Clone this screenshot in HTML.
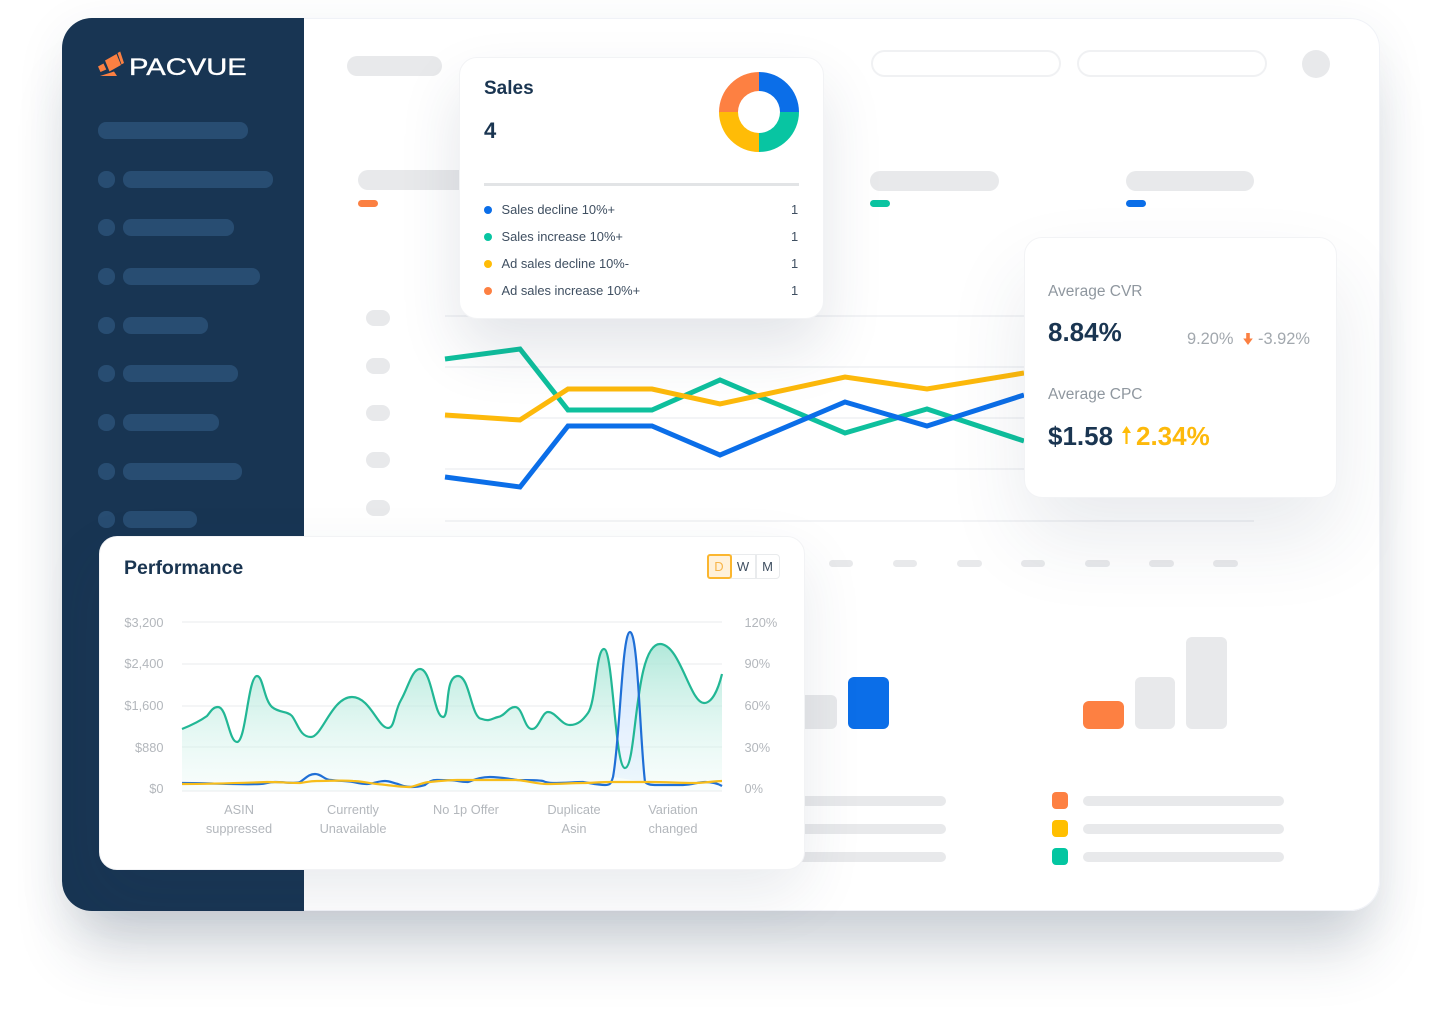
<!DOCTYPE html>
<html lang="en">
<head>
<meta charset="utf-8">
<title>Pacvue Dashboard</title>
<style>
html,body{margin:0;padding:0;background:#fff;}
body{width:1440px;height:1031px;position:relative;overflow:hidden;font-family:"Liberation Sans",Arial,sans-serif;color:#1a3551;}
.a{position:absolute;}
.win{left:62px;top:18px;width:1318px;height:893px;border-radius:30px;background:#fff;box-shadow:0 52px 60px -14px rgba(40,60,85,.2),0 12px 50px rgba(40,60,85,.08);}
.winclip{left:62px;top:18px;width:1318px;height:893px;border-radius:30px;overflow:hidden;background:#fff;box-shadow:inset 0 0 0 1px #f0f2f7;}
.side{left:0;top:0;width:242px;height:893px;background:#183553;}
.sb{background:#284d72;border-radius:8px;height:17px;}
.g{background:#e8e9eb;border-radius:10px;}
.card{background:#fff;border:1.5px solid #f2f3f5;box-sizing:border-box;}
.t{position:absolute;white-space:nowrap;line-height:1;}
.row{font-size:12.9px;color:#3f4f61;}
.ax{font-size:12.8px;color:#b3b7bc;}
.c{text-align:center;width:100px;}
</style>
</head>
<body>
<div class="a win"></div>
<div class="a winclip">
  <div class="a side"></div>
</div>

<!-- sidebar bars -->
<div class="a sb" style="left:98px;top:122px;width:150px;"></div>
<div class="a sb" style="left:98px;top:171px;width:17px;"></div><div class="a sb" style="left:123px;top:171px;width:150px;"></div>
<div class="a sb" style="left:98px;top:219px;width:17px;"></div><div class="a sb" style="left:123px;top:219px;width:111px;"></div>
<div class="a sb" style="left:98px;top:268px;width:17px;"></div><div class="a sb" style="left:123px;top:268px;width:137px;"></div>
<div class="a sb" style="left:98px;top:317px;width:17px;"></div><div class="a sb" style="left:123px;top:317px;width:85px;"></div>
<div class="a sb" style="left:98px;top:365px;width:17px;"></div><div class="a sb" style="left:123px;top:365px;width:115px;"></div>
<div class="a sb" style="left:98px;top:414px;width:17px;"></div><div class="a sb" style="left:123px;top:414px;width:96px;"></div>
<div class="a sb" style="left:98px;top:463px;width:17px;"></div><div class="a sb" style="left:123px;top:463px;width:119px;"></div>
<div class="a sb" style="left:98px;top:511px;width:17px;"></div><div class="a sb" style="left:123px;top:511px;width:74px;"></div>

<!-- logo -->
<svg class="a" style="left:90px;top:44px;" width="40" height="36" viewBox="90 44 40 36">
  <g fill="#fb8042">
    <polygon points="105,60.5 116.5,54 121,65 109.5,71.5"/>
    <polygon points="117.5,53 120.2,51.5 124,63 121.5,64.5"/>
    <polygon points="98,66.5 103.5,63.5 106.3,69.5 100.5,72"/>
    <polygon points="100,76 114,71.5 117,76"/>
  </g>
</svg>
<div class="t" style="left:129px;top:56px;font-size:24px;color:#fff;transform:scaleX(1.215);transform-origin:0 0;-webkit-text-stroke:.35px #fff;">PACVUE</div>

<!-- top placeholders -->
<div class="a g" style="left:347px;top:56px;width:95px;height:20px;"></div>
<div class="a" style="left:871px;top:50px;width:190px;height:27px;border:2px solid #f0f1f3;border-radius:14px;box-sizing:border-box;"></div>
<div class="a" style="left:1077px;top:50px;width:190px;height:27px;border:2px solid #f0f1f3;border-radius:14px;box-sizing:border-box;"></div>
<div class="a g" style="left:1302px;top:50px;width:28px;height:28px;border-radius:50%;"></div>

<div class="a g" style="left:358px;top:170px;width:128px;height:20px;"></div>
<div class="a" style="left:358px;top:200px;width:20px;height:7px;border-radius:4px;background:#fb8042;"></div>
<div class="a g" style="left:870px;top:171px;width:129px;height:20px;"></div>
<div class="a" style="left:870px;top:200px;width:20px;height:7px;border-radius:4px;background:#0ac4a1;"></div>
<div class="a g" style="left:1126px;top:171px;width:128px;height:20px;"></div>
<div class="a" style="left:1126px;top:200px;width:20px;height:7px;border-radius:4px;background:#0b6ee8;"></div>

<!-- y axis pills -->
<div class="a g" style="left:366px;top:310px;width:24px;height:16px;border-radius:8px;"></div>
<div class="a g" style="left:366px;top:358px;width:24px;height:16px;border-radius:8px;"></div>
<div class="a g" style="left:366px;top:405px;width:24px;height:16px;border-radius:8px;"></div>
<div class="a g" style="left:366px;top:452px;width:24px;height:16px;border-radius:8px;"></div>
<div class="a g" style="left:366px;top:500px;width:24px;height:16px;border-radius:8px;"></div>

<!-- line chart -->
<svg class="a" style="left:0;top:0;" width="1440" height="1031" viewBox="0 0 1440 1031">
  <g stroke="#f3f4f6" stroke-width="2" fill="none">
    <line x1="445" y1="316" x2="1254" y2="316"/>
    <line x1="445" y1="367" x2="1254" y2="367"/>
    <line x1="445" y1="418" x2="1254" y2="418"/>
    <line x1="445" y1="469" x2="1254" y2="469"/>
    <line x1="445" y1="521" x2="1254" y2="521"/>
  </g>
  <g fill="none" stroke-width="5" stroke-linejoin="miter">
    <polyline stroke="#0ec09d" points="445,359 520,349 568,410 652,410 720,380 845,433 927,409 1024,441"/>
    <polyline stroke="#0b6ee8" points="445,477 520,487 568,426 652,426 720,455 845,402 927,426 1024,395"/>
    <polyline stroke="#fdb90b" points="445,415 520,420 568,389 652,389 720,404 845,377 927,389 1024,373"/>
  </g>
</svg>

<!-- x dashes -->
<div class="a g" style="left:829px;top:560px;width:24px;height:7px;"></div>
<div class="a g" style="left:893px;top:560px;width:24px;height:7px;"></div>
<div class="a g" style="left:957px;top:560px;width:25px;height:7px;"></div>
<div class="a g" style="left:1021px;top:560px;width:24px;height:7px;"></div>
<div class="a g" style="left:1085px;top:560px;width:25px;height:7px;"></div>
<div class="a g" style="left:1149px;top:560px;width:25px;height:7px;"></div>
<div class="a g" style="left:1213px;top:560px;width:25px;height:7px;"></div>

<!-- bars -->
<div class="a g" style="left:790px;top:695px;width:47px;height:34px;border-radius:6px;"></div>
<div class="a" style="left:848px;top:677px;width:41px;height:52px;border-radius:6px;background:#0b6ee8;"></div>
<div class="a" style="left:1083px;top:701px;width:41px;height:28px;border-radius:6px;background:#fd8042;"></div>
<div class="a g" style="left:1135px;top:677px;width:40px;height:52px;border-radius:6px;"></div>
<div class="a g" style="left:1186px;top:637px;width:41px;height:92px;border-radius:6px;"></div>

<!-- legend -->
<div class="a g" style="left:790px;top:796px;width:156px;height:10px;"></div>
<div class="a g" style="left:790px;top:824px;width:156px;height:10px;"></div>
<div class="a g" style="left:790px;top:852px;width:156px;height:10px;"></div>
<div class="a" style="left:1052px;top:792px;width:16px;height:17px;border-radius:4px;background:#fd8042;"></div>
<div class="a" style="left:1052px;top:820px;width:16px;height:17px;border-radius:4px;background:#ffbf00;"></div>
<div class="a" style="left:1052px;top:848px;width:16px;height:17px;border-radius:4px;background:#03c6a1;"></div>
<div class="a g" style="left:1083px;top:796px;width:201px;height:10px;"></div>
<div class="a g" style="left:1083px;top:824px;width:201px;height:10px;"></div>
<div class="a g" style="left:1083px;top:852px;width:201px;height:10px;"></div>

<!-- Sales card -->
<div class="a card" style="left:459px;top:57px;width:365px;height:262px;border-radius:18px;box-shadow:0 30px 60px rgba(40,55,85,.13);"></div>
<div class="t" style="left:484px;top:79px;font-size:19px;font-weight:700;">Sales</div>
<div class="t" style="left:484px;top:120px;font-size:22px;font-weight:700;">4</div>
<svg class="a" style="left:719px;top:72px;" width="80" height="80" viewBox="0 0 80 80">
  <path d="M40 0A40 40 0 0 1 80 40H61A21 21 0 0 0 40 19Z" fill="#0b6ee8"/>
  <path d="M80 40A40 40 0 0 1 40 80V61A21 21 0 0 0 61 40Z" fill="#08c5a2"/>
  <path d="M40 80A40 40 0 0 1 0 40H19A21 21 0 0 0 40 61Z" fill="#ffbc07"/>
  <path d="M0 40A40 40 0 0 1 40 0V19A21 21 0 0 0 19 40Z" fill="#fd8042"/>
</svg>
<div class="a" style="left:484px;top:183px;width:315px;height:3px;background:#e2e4e6;"></div>
<div class="a" style="left:484px;top:206px;width:8px;height:8px;border-radius:50%;background:#0b6ee8;"></div>
<div class="a" style="left:484px;top:233px;width:8px;height:8px;border-radius:50%;background:#08c5a2;"></div>
<div class="a" style="left:484px;top:260px;width:8px;height:8px;border-radius:50%;background:#ffbc07;"></div>
<div class="a" style="left:484px;top:287px;width:8px;height:8px;border-radius:50%;background:#fd8042;"></div>
<div class="t row" style="left:501.5px;top:204px;">Sales decline 10%+</div>
<div class="t row" style="left:501.5px;top:231px;">Sales increase 10%+</div>
<div class="t row" style="left:501.5px;top:258px;">Ad sales decline 10%-</div>
<div class="t row" style="left:501.5px;top:285px;">Ad sales increase 10%+</div>
<div class="t row" style="left:791px;top:204px;">1</div>
<div class="t row" style="left:791px;top:231px;">1</div>
<div class="t row" style="left:791px;top:258px;">1</div>
<div class="t row" style="left:791px;top:285px;">1</div>

<!-- CVR card -->
<div class="a card" style="left:1024px;top:237px;width:313px;height:261px;border-radius:18px;box-shadow:0 40px 80px rgba(40,55,85,.1);"></div>
<div class="t" style="left:1048px;top:283.5px;font-size:15.5px;color:#8f979f;">Average CVR</div>
<div class="t" style="left:1048px;top:319px;font-size:26px;font-weight:700;">8.84%</div>
<div class="t" style="left:1187px;top:330.5px;font-size:16.4px;color:#a2a8ae;">9.20%</div>
<svg class="a" style="left:1243px;top:332px;" width="10" height="14" viewBox="0 0 10 14"><path d="M3.2 1H6.8V6.5H9.8L5 13L.2 6.5H3.2Z" fill="#fb8042"/></svg>
<div class="t" style="left:1258px;top:330.5px;font-size:16.4px;color:#a2a8ae;">-3.92%</div>
<div class="t" style="left:1048px;top:387px;font-size:15.5px;color:#8f979f;">Average CPC</div>
<div class="t" style="left:1048px;top:423px;font-size:26px;font-weight:700;">$1.58</div>
<svg class="a" style="left:1121px;top:425px;" width="11" height="20" viewBox="0 0 11 20"><path d="M5.5 1L10 8H6.6V19H4.4V8H1Z" fill="#ffbc07"/></svg>
<div class="t" style="left:1136px;top:423px;font-size:26px;font-weight:700;color:#fdb90b;">2.34%</div>

<!-- Performance card -->
<div class="a card" style="left:99px;top:536px;width:706px;height:334px;border-radius:18px;box-shadow:0 24px 60px rgba(40,55,85,.1);"></div>
<div class="t" style="left:124px;top:559px;font-size:19.5px;font-weight:700;">Performance</div>
<div class="a" style="left:731px;top:554px;width:49px;height:25px;box-sizing:border-box;border:1.5px solid #e9ebed;border-radius:0 4px 4px 0;background:#fff;"></div>
<div class="a" style="left:755px;top:554px;width:1.5px;height:25px;background:#e9ebed;"></div>
<div class="a" style="left:706.5px;top:553.5px;width:25px;height:25px;box-sizing:border-box;border:2px solid #fbb62f;border-radius:3px;background:#fff1da;"></div>
<div class="t" style="left:706px;top:560px;width:26px;text-align:center;font-size:13px;color:#f7b54a;">D</div>
<div class="t" style="left:731px;top:560px;width:24px;text-align:center;font-size:13px;color:#3f4f61;">W</div>
<div class="t" style="left:755px;top:560px;width:25px;text-align:center;font-size:13px;color:#3f4f61;">M</div>

<div class="t ax" style="left:63.5px;top:616.5px;width:100px;text-align:right;">$3,200</div>
<div class="t ax" style="left:63.5px;top:658px;width:100px;text-align:right;">$2,400</div>
<div class="t ax" style="left:63.5px;top:700px;width:100px;text-align:right;">$1,600</div>
<div class="t ax" style="left:63.5px;top:741.5px;width:100px;text-align:right;">$880</div>
<div class="t ax" style="left:63.5px;top:783px;width:100px;text-align:right;">$0</div>
<div class="t ax" style="left:744.5px;top:616.5px;">120%</div>
<div class="t ax" style="left:744.5px;top:658px;">90%</div>
<div class="t ax" style="left:744.5px;top:700px;">60%</div>
<div class="t ax" style="left:744.5px;top:741.5px;">30%</div>
<div class="t ax" style="left:744.5px;top:783px;">0%</div>

<div class="t ax c" style="left:189px;top:804px;">ASIN</div>
<div class="t ax c" style="left:189px;top:823px;">suppressed</div>
<div class="t ax c" style="left:303px;top:804px;">Currently</div>
<div class="t ax c" style="left:303px;top:823px;">Unavailable</div>
<div class="t ax c" style="left:416px;top:804px;">No 1p Offer</div>
<div class="t ax c" style="left:524px;top:804px;">Duplicate</div>
<div class="t ax c" style="left:524px;top:823px;">Asin</div>
<div class="t ax c" style="left:623px;top:804px;">Variation</div>
<div class="t ax c" style="left:623px;top:823px;">changed</div>

<svg class="a" style="left:0;top:0;" width="1440" height="1031" viewBox="0 0 1440 1031">
  <defs>
    <linearGradient id="gf" gradientUnits="userSpaceOnUse" x1="0" y1="644" x2="0" y2="792">
      <stop offset="0" stop-color="#a9e6d6" stop-opacity=".9"/>
      <stop offset="1" stop-color="#dff6f1" stop-opacity=".2"/>
    </linearGradient>
    <linearGradient id="bf" gradientUnits="userSpaceOnUse" x1="0" y1="632" x2="0" y2="786">
      <stop offset="0" stop-color="#bcd9fb" stop-opacity=".85"/>
      <stop offset="1" stop-color="#e3f0fe" stop-opacity=".45"/>
    </linearGradient>
  </defs>
  <g stroke="#f4f5f6" stroke-width="2" fill="none">
    <line x1="182" y1="622" x2="722" y2="622"/>
    <line x1="182" y1="664" x2="722" y2="664"/>
    <line x1="182" y1="706" x2="722" y2="706"/>
    <line x1="182" y1="747" x2="722" y2="747"/>
    <line x1="182" y1="791" x2="722" y2="791"/>
  </g>
  <path fill="url(#gf)" d="M182 729C192 725 200 721 207 716C211 711 213 707 218 707C227 707 229 742 237 742C246 742 248 676 257 676C263 676 264 700 272 707C279 713 288 711 292 716C298 724 300 737 311 737C322 737 332 697 352 697C370 697 378 728 388 728C395 728 394 712 401 700C408 688 412 669 420 669C432 669 434 717 443 717C450 717 444 676 458 676C470 676 471 719 482 719C490 722 493 718 498 717C505 716 508 707 515 707C523 707 524 729 532 729C539 729 542 712 548 712C556 712 561 725 570 725C578 725 583 720 588 713C596 702 596 649 604 649C613 649 615 768 625 768C637 768 634 644 660 644C680 644 690 703 704 703C712 703 718 690 722 674V791H182Z"/>
  <path fill="url(#bf)" d="M613 777C620 740 622 632 630 632C638 632 640 740 645 782Z"/>
  <path fill="none" stroke="#22b795" stroke-width="2.2" d="M182 729C192 725 200 721 207 716C211 711 213 707 218 707C227 707 229 742 237 742C246 742 248 676 257 676C263 676 264 700 272 707C279 713 288 711 292 716C298 724 300 737 311 737C322 737 332 697 352 697C370 697 378 728 388 728C395 728 394 712 401 700C408 688 412 669 420 669C432 669 434 717 443 717C450 717 444 676 458 676C470 676 471 719 482 719C490 722 493 718 498 717C505 716 508 707 515 707C523 707 524 729 532 729C539 729 542 712 548 712C556 712 561 725 570 725C578 725 583 720 588 713C596 702 596 649 604 649C613 649 615 768 625 768C637 768 634 644 660 644C680 644 690 703 704 703C712 703 718 690 722 674"/>
  <path fill="none" stroke="#1f6fd6" stroke-width="2.2" d="M182 783C210 783 240 785 260 784C266 784 268 782 275 782C285 782 295 784 300 782C306 778 309 774 315 774C322 774 324 780 331 780C340 781 347 781 353 782C358 783 362 784 367 784C373 784 377 781 385 781C390 781 393 783 398 784C403 786 406 787 412 787C418 787 421 786 425 785C429 782 431 780 437 780C445 780 452 780 458 781C463 782 465 782 468 782C474 780 480 777 490 777C500 777 510 779 517 780C527 780 538 780 543 781C547 783 550 783 553 783C565 783 575 782 583 782C590 783 598 785 605 785C610 785 611 784 613 777C620 740 622 632 630 632C638 632 640 740 645 782C648 785 652 785 657 785C665 785 675 785 683 785C692 785 698 782 705 782C712 782 717 783 722 786"/>
  <path fill="none" stroke="#f7bd1b" stroke-width="2.2" d="M182 784C205 784 240 783 267 782C280 782 290 783 300 783C307 782 311 781 317 781C330 781 343 780 353 781C360 781 368 783 377 784C388 785 400 787 410 787C417 786 423 782 430 782C440 781 448 780 457 780C467 780 475 780 483 780C495 780 507 780 517 780C528 781 538 784 547 784C560 784 572 783 583 783C592 783 600 782 610 782C625 782 638 782 650 782C665 782 680 783 693 783C705 783 714 781 722 781"/>
</svg>
</body>
</html>
